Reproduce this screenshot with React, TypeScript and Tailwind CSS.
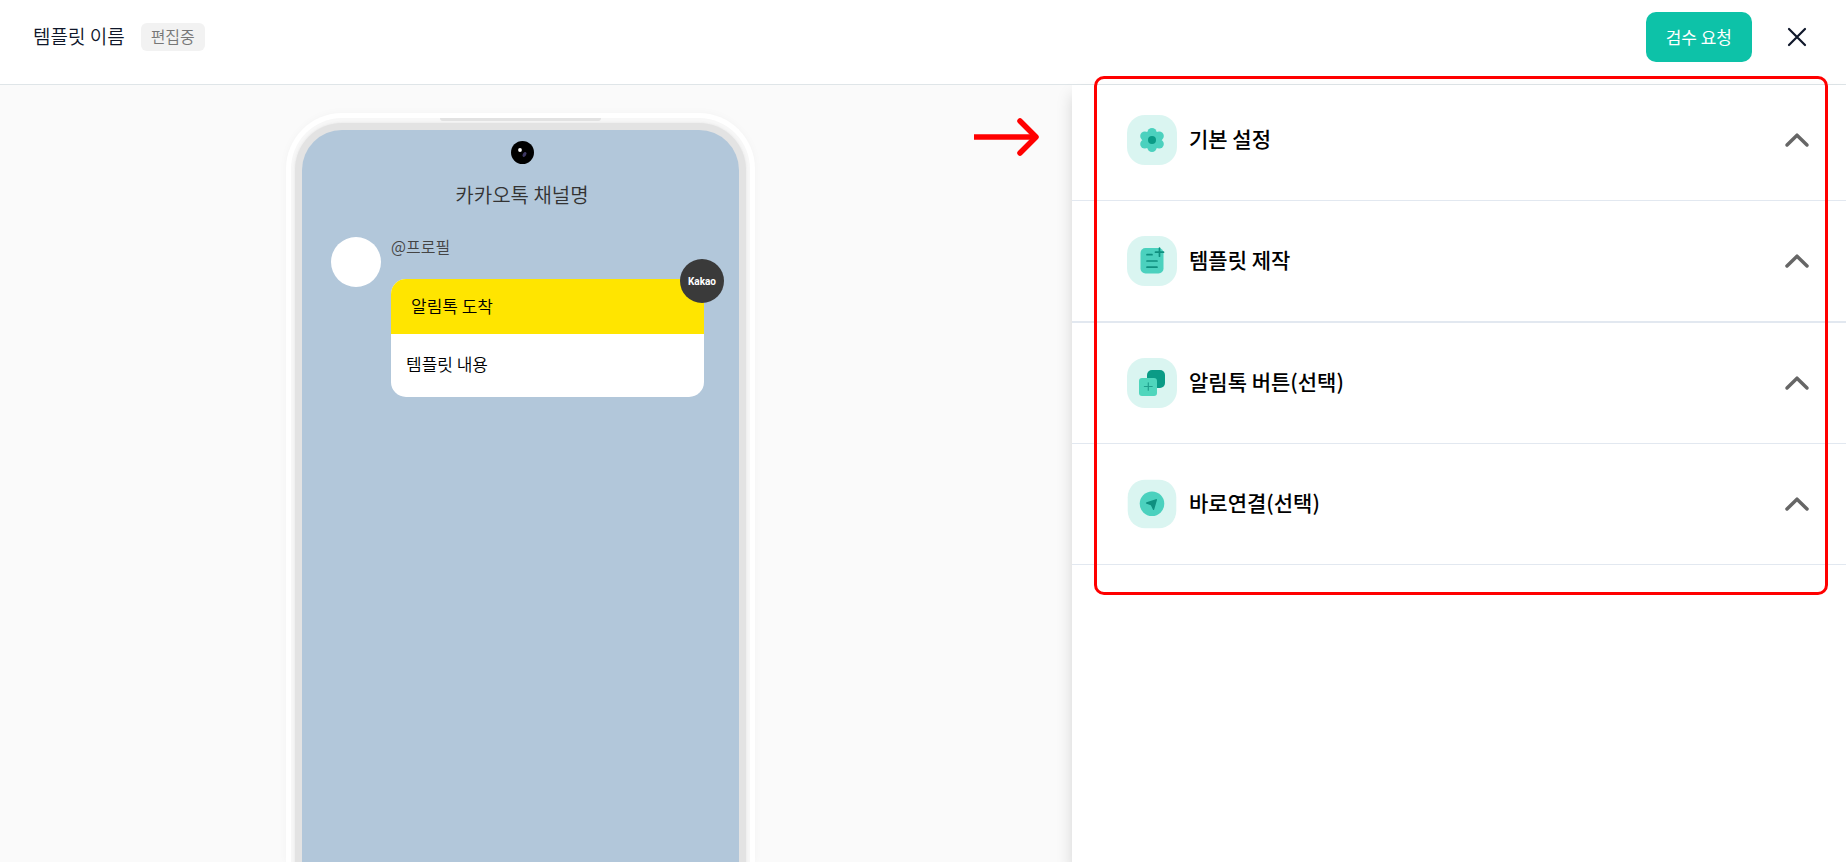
import React, { useState } from "react";

interface SectionProps {
  id: string;
  title: string;
  icon: React.ReactNode;
  className: string;
}

function SettingIcon() {
  return (
    <svg viewBox="0 0 50 50" className="size-[50px] shrink-0" aria-hidden="true">
      <rect width="50" height="50" rx="18" fill="#daf5f1" />
      <g fill="#4bd1be">
        <circle cx="25" cy="25" r="9.5" />
        <circle cx="25" cy="17.6" r="4.6" />
        <circle cx="25" cy="32.4" r="4.6" />
        <circle cx="17.8" cy="21" r="4.6" />
        <circle cx="17.8" cy="29" r="4.6" />
        <circle cx="32.2" cy="21" r="4.6" />
        <circle cx="32.2" cy="29" r="4.6" />
      </g>
      <circle cx="25" cy="25" r="4" fill="#0a9b86" />
    </svg>
  );
}

function TemplateIcon() {
  return (
    <svg viewBox="0 0 50 50" className="size-[50px] shrink-0" aria-hidden="true">
      <rect width="50" height="50" rx="18" fill="#daf5f1" />
      <rect x="13.5" y="12" width="23" height="25.5" rx="5" fill="#4bd1be" />
      <g stroke="#0f8f7f" strokeWidth="1.7" strokeLinecap="round">
        <path d="M20 18.7h5M20 25h10M20 31.2h10" />
        <path d="M32.5 12.2v8M28.5 16.2h8" />
      </g>
    </svg>
  );
}

function ButtonIcon() {
  return (
    <svg viewBox="0 0 50 50" className="size-[50px] shrink-0" aria-hidden="true">
      <rect width="50" height="50" rx="18" fill="#daf5f1" />
      <rect x="20" y="12" width="18" height="18" rx="5" fill="#0a9b86" />
      <rect x="12" y="20" width="18" height="18" rx="3" fill="#4fd6bc" />
      <path d="M21.3 24.8v7.4M17.4 28.5h7.8" stroke="#1f9f8c" strokeWidth="1.2" strokeLinecap="round" />
    </svg>
  );
}

function LinkIcon() {
  return (
    <svg viewBox="0 0 50 50" className="size-[50px] shrink-0" aria-hidden="true">
      <rect x="0.7" y="0.7" width="48.6" height="48.6" rx="17.5" fill="#daf5f1" />
      <circle cx="25" cy="24.7" r="12.3" fill="#4bd1be" />
      <path d="M19.5 23.2l9.3-3q1.5-.4 1.1 1l-2.7 9.2q-.6 1.2-1.3 0l-1.8-3.6q-.3-.7-1-.9l-3.5-1.1q-1.4-.8-.1-1.6z" fill="#0f8f7f" />
    </svg>
  );
}

function Section({ id, title, icon, className }: SectionProps) {
  const [open, setOpen] = useState(false);

  return (
    <section className={className}>
      <h2>
        <button
          type="button"
          id={id}
          aria-expanded={open}
          onClick={() => setOpen(!open)}
          className="flex w-full cursor-pointer items-center gap-3 pl-[55px] pr-9 text-left"
        >
          {icon}
          <span className="grow pb-1 text-[21px] leading-8 font-medium text-black">{title}</span>
          <svg viewBox="0 0 26 16" className="h-4 w-[26px] shrink-0" fill="none" aria-hidden="true">
            <path d="M3 13L13 3.2l10 9.8" stroke="#666" strokeWidth="3.5" strokeLinecap="round" strokeLinejoin="round" />
          </svg>
        </button>
      </h2>
    </section>
  );
}

function PhonePreview() {
  return (
    <div className="w-[469px] shrink-0 rounded-t-[56px] border-x-[5px] border-t-[5px] border-white bg-[#f7f7f7] shadow-[0_0_8px_rgba(0,0,0,0.03)]">
      <div className="mx-auto h-[3px] w-[161px] rounded-b-sm bg-[#e2e2e2]" />
      <div className="mx-[4px] mt-0.5 h-[900px] rounded-t-[47px] bg-[#e3e3e3] px-[7px] pt-[7px] shadow-[0_0_3px_#e3e3e3]">
        <div className="h-full rounded-t-[40px] bg-[#b2c7da] pt-[11px]">
          <div className="pl-[3px]">
            <svg viewBox="0 0 23 23" className="mx-auto size-[23px]" aria-hidden="true">
              <circle cx="11.5" cy="11.5" r="11.5" fill="#000" />
              <ellipse cx="13.5" cy="13.5" rx="1.6" ry="2.6" fill="#3d3763" transform="rotate(35 13.5 13.5)" />
              <circle cx="9" cy="9" r="1.9" fill="#fff" />
            </svg>
            <p className="mt-[15px] text-center text-xl leading-8 font-[350] text-[#333]">카카오톡 채널명</p>
          </div>
          <div className="mt-[26px] flex gap-[10px] pl-[29px] pr-[35px]">
            <div className="size-[50px] shrink-0 rounded-full bg-white" />
            <div className="grow">
              <p className="text-base leading-[18px] font-[350] text-[#444]">@프로필</p>
              <div className="relative mt-6">
                <div className="overflow-hidden rounded-[15px] bg-white text-[17px] font-[350] text-black">
                  <p className="bg-[#ffe500] px-5 pt-[15px] pb-[17px] leading-[23px]">알림톡 도착</p>
                  <p className="px-[15px] pt-[18px] pb-[22px] leading-[23px]">템플릿 내용</p>
                </div>
                <span className="absolute -top-5 -right-5 flex size-11 items-center justify-center rounded-full bg-[#3a3a3a] font-[Roboto] text-[10px] font-bold text-white">
                  Kakao
                </span>
              </div>
            </div>
          </div>
        </div>
      </div>
    </div>
  );
}

export default function App() {
  return (
    <div className="flex h-screen flex-col overflow-hidden bg-white font-['Noto_Sans_CJK_KR',sans-serif]">
      <header className="flex shrink-0 items-start justify-between border-b border-[#dfe5e8] pt-3 pb-[22px] pl-[33px] pr-9">
        <div className="flex h-[50px] items-center gap-4">
          <h1 className="pb-px text-[19px] font-[350] text-[#0f172a]">템플릿 이름</h1>
          <span className="rounded-md bg-[#f2f2f2] px-[10px] pt-px pb-[3px] text-base font-[350] text-[#777]">편집중</span>
        </div>
        <div className="flex items-center gap-8">
          <button type="button" className="h-[50px] cursor-pointer rounded-[10px] bg-[#0dc2a8] px-5 text-[17px] text-white">
            검수 요청
          </button>
          <button type="button" aria-label="닫기" className="flex w-[26px] cursor-pointer justify-center">
            <svg viewBox="0 0 20 20" className="size-5" aria-hidden="true">
              <path d="M2 2l16 16M18 2L2 18" stroke="#0f172a" strokeWidth="2.2" strokeLinecap="round" />
            </svg>
          </button>
        </div>
      </header>

      <div className="flex min-h-0 grow">
        <main className="relative flex min-w-0 grow justify-center overflow-hidden bg-[#fafafa] pt-7 pr-[31px]">
          <PhonePreview />
          <svg viewBox="0 0 66 38" className="absolute top-[33px] right-8 h-[38px] w-[66px]" fill="none" aria-hidden="true">
            <path d="M0 19h62" stroke="#f00" strokeWidth="5.5" />
            <path d="M46 3l16 16L46 35" stroke="#f00" strokeWidth="5.5" strokeLinecap="round" strokeLinejoin="round" />
          </svg>
        </main>

        <aside className="relative w-[774px] shrink-0 bg-white shadow-[0_10px_15px_rgba(0,0,0,0.15)]">
          <Section id="basic" title="기본 설정" icon={<SettingIcon />} className="border-b border-[#e2e8f0] pt-[30px] pb-[35px]" />
          <Section id="template" title="템플릿 제작" icon={<TemplateIcon />} className="border-b-2 border-[#e2e8f0] py-[35px]" />
          <Section id="buttons" title="알림톡 버튼(선택)" icon={<ButtonIcon />} className="border-b border-[#e2e8f0] py-[35px]" />
          <Section id="links" title="바로연결(선택)" icon={<LinkIcon />} className="border-b border-[#e2e8f0] py-[35px]" />
          <div className="pointer-events-none absolute inset-x-0 -top-[9px] mr-[18px] ml-[22px] h-[519px] rounded-[10px] border-[3px] border-[#f00]" />
        </aside>
      </div>
    </div>
  );
}
